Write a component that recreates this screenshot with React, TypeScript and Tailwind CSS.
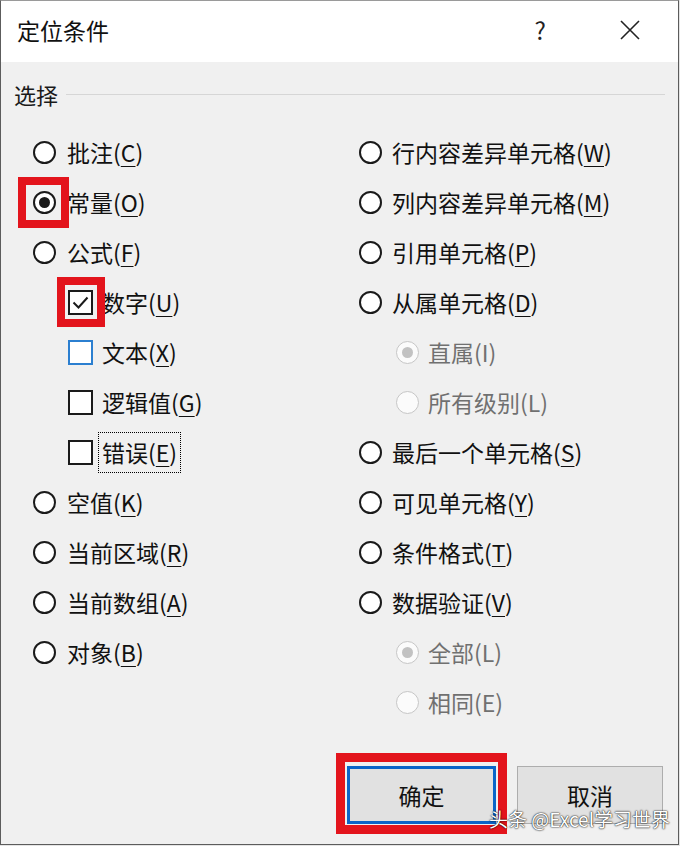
import React from "react";

type Item = {
  kind: "radio" | "check" | "sub";
  label: string;
  k: string;
  checked?: boolean;
  redBox?: boolean;
  blue?: boolean;
  focus?: boolean;
};

const leftItems: Item[] = [
  { kind: "radio", label: "批注", k: "C" },
  { kind: "radio", label: "常量", k: "O", checked: true, redBox: true },
  { kind: "radio", label: "公式", k: "F" },
  { kind: "check", label: "数字", k: "U", checked: true, redBox: true },
  { kind: "check", label: "文本", k: "X", blue: true },
  { kind: "check", label: "逻辑值", k: "G" },
  { kind: "check", label: "错误", k: "E", focus: true },
  { kind: "radio", label: "空值", k: "K" },
  { kind: "radio", label: "当前区域", k: "R" },
  { kind: "radio", label: "当前数组", k: "A" },
  { kind: "radio", label: "对象", k: "B" },
];

const rightItems: Item[] = [
  { kind: "radio", label: "行内容差异单元格", k: "W" },
  { kind: "radio", label: "列内容差异单元格", k: "M" },
  { kind: "radio", label: "引用单元格", k: "P" },
  { kind: "radio", label: "从属单元格", k: "D" },
  { kind: "sub", label: "直属", k: "I", checked: true },
  { kind: "sub", label: "所有级别", k: "L" },
  { kind: "radio", label: "最后一个单元格", k: "S" },
  { kind: "radio", label: "可见单元格", k: "Y" },
  { kind: "radio", label: "条件格式", k: "T" },
  { kind: "radio", label: "数据验证", k: "V" },
  { kind: "sub", label: "全部", k: "L", checked: true },
  { kind: "sub", label: "相同", k: "E" },
];

function Radio({ checked, disabled }: { checked?: boolean; disabled?: boolean }) {
  return (
    <span
      className={
        disabled
          ? "w-[23px] h-[23px] rounded-full border-[1.5px] border-[#c6c6c6] bg-[#fbfbfb] flex items-center justify-center shrink-0"
          : "w-[23px] h-[23px] rounded-full border-2 border-[#1a1a1a] bg-white flex items-center justify-center shrink-0"
      }
    >
      {checked && (
        <span
          className={
            disabled
              ? "w-[11px] h-[11px] rounded-full bg-[#c2c2c2]"
              : "w-[11px] h-[11px] rounded-full bg-[#1a1a1a]"
          }
        />
      )}
    </span>
  );
}

function Check({ checked, blue }: { checked?: boolean; blue?: boolean }) {
  return (
    <span
      className={
        blue
          ? "w-[25px] h-[25px] border-2 border-[#2b7fd0] bg-white flex items-center justify-center shrink-0"
          : "w-[25px] h-[25px] border-2 border-[#1a1a1a] bg-white flex items-center justify-center shrink-0"
      }
    >
      {checked && (
        <svg width="19" height="19" viewBox="0 0 19 19">
          <path d="M2.5 9.5 L7.5 14.5 L16.5 4.5" fill="none" stroke="#1a1a1a" strokeWidth="2" />
        </svg>
      )}
    </span>
  );
}

function Label({ item }: { item: Item }) {
  const disabled = item.kind === "sub";
  return (
    <span className={disabled ? "text-[#707070]" : "text-[#111]"}>
      {item.label}(
      {disabled ? item.k : <span className="underline underline-offset-[4px] decoration-1">{item.k}</span>})
    </span>
  );
}

function Row({ item, left }: { item: Item; left: boolean }) {
  if (item.kind === "check") {
    return (
      <div className="h-[50px] flex items-center pl-[35px]">
        <span className="relative flex">
          <Check checked={item.checked} blue={item.blue} />
          {item.redBox && (
            <span className="absolute left-[-11px] top-[-13px] w-[48px] h-[50px] border-[8px] border-[#e3141c]" />
          )}
        </span>
        {item.focus ? (
          <span className="ml-[5px] h-[41px] px-[3px] flex items-center border border-dotted border-black">
            <Label item={item} />
          </span>
        ) : (
          <span className="ml-[9px]">
            <Label item={item} />
          </span>
        )}
      </div>
    );
  }
  const sub = item.kind === "sub";
  return (
    <div className={sub ? "h-[50px] flex items-center pl-[37px]" : "h-[50px] flex items-center"}>
      <span className="relative flex">
        <Radio checked={item.checked} disabled={sub} />
        {item.redBox && (
          <span className="absolute left-[-15px] top-[-14px] w-[51px] h-[51px] border-[8px] border-[#e3141c]" />
        )}
      </span>
      <span className={left ? "ml-[11px]" : sub ? "ml-[9px]" : "ml-[10px]"}>
        <Label item={item} />
      </span>
    </div>
  );
}

export default function App() {
  return (
    <div className="w-[680px] h-[846px] bg-[#e4e4e4] font-['Noto_Sans_CJK_SC','Noto_Sans',sans-serif]">
      <div className="relative w-[679px] h-[845px] border border-[#5c5c5c] border-t-[#9a9a9a] bg-[#f0f0f0] flex flex-col overflow-hidden">
        {/* Title bar */}
        <div className="h-[61px] bg-white flex items-center shrink-0">
          <span className="ml-[16px] mt-[-3px] text-[23px] leading-none text-[#111]">定位条件</span>
          <span className="ml-auto mr-[74px] mt-[-3px] text-[24px] leading-none text-[#222]">?</span>
          <svg width="20" height="20" viewBox="0 0 20 20" className="mr-[38px] mt-[-3px]">
            <path d="M1 1 L19 19 M19 1 L1 19" stroke="#222" strokeWidth="1.6" fill="none" />
          </svg>
        </div>

        {/* Group header */}
        <div className="h-[70px] flex items-center pl-[13px] pr-[13px] shrink-0 mt-[-3px]">
          <span className="text-[22px] leading-none text-[#1a1a1a]">选择</span>
          <span className="flex-1 ml-[8px] h-px bg-[#d6d6d6]" />
        </div>

        {/* Options */}
        <div className="flex text-[23px] leading-none mt-[-2px]">
          <div className="w-[358px] pl-[32px] flex flex-col">
            {leftItems.map((it, i) => (
              <Row key={i} item={it} left={true} />
            ))}
          </div>
          <div className="flex-1 flex flex-col">
            {rightItems.map((it, i) => (
              <Row key={i} item={it} left={false} />
            ))}
          </div>
        </div>

        {/* Buttons */}
        <div className="flex justify-end items-start gap-[21px] pr-[15px] mt-[39px]">
          <div className="relative">
            <button className="w-[149px] h-[58px] bg-[#e1e1e1] border-[3px] border-[#0a64c8] text-[23px] leading-none text-[#111] flex items-center justify-center">
              确定
            </button>
            <span className="absolute left-[-11px] top-[-13px] w-[171px] h-[81px] border-[9px] border-[#e3141c]" />
          </div>
          <button className="w-[146px] h-[58px] bg-[#e1e1e1] border border-[#adadad] text-[23px] leading-none text-[#111] flex items-center justify-center">
            取消
          </button>
        </div>

        <span className="absolute left-[488px] top-[808px] text-[19px] leading-none text-white [text-shadow:0_0_2px_rgba(0,0,0,0.9),0_0_1px_rgba(0,0,0,0.9)]">
          头条 @Excel学习世界
        </span>
      </div>
    </div>
  );
}
